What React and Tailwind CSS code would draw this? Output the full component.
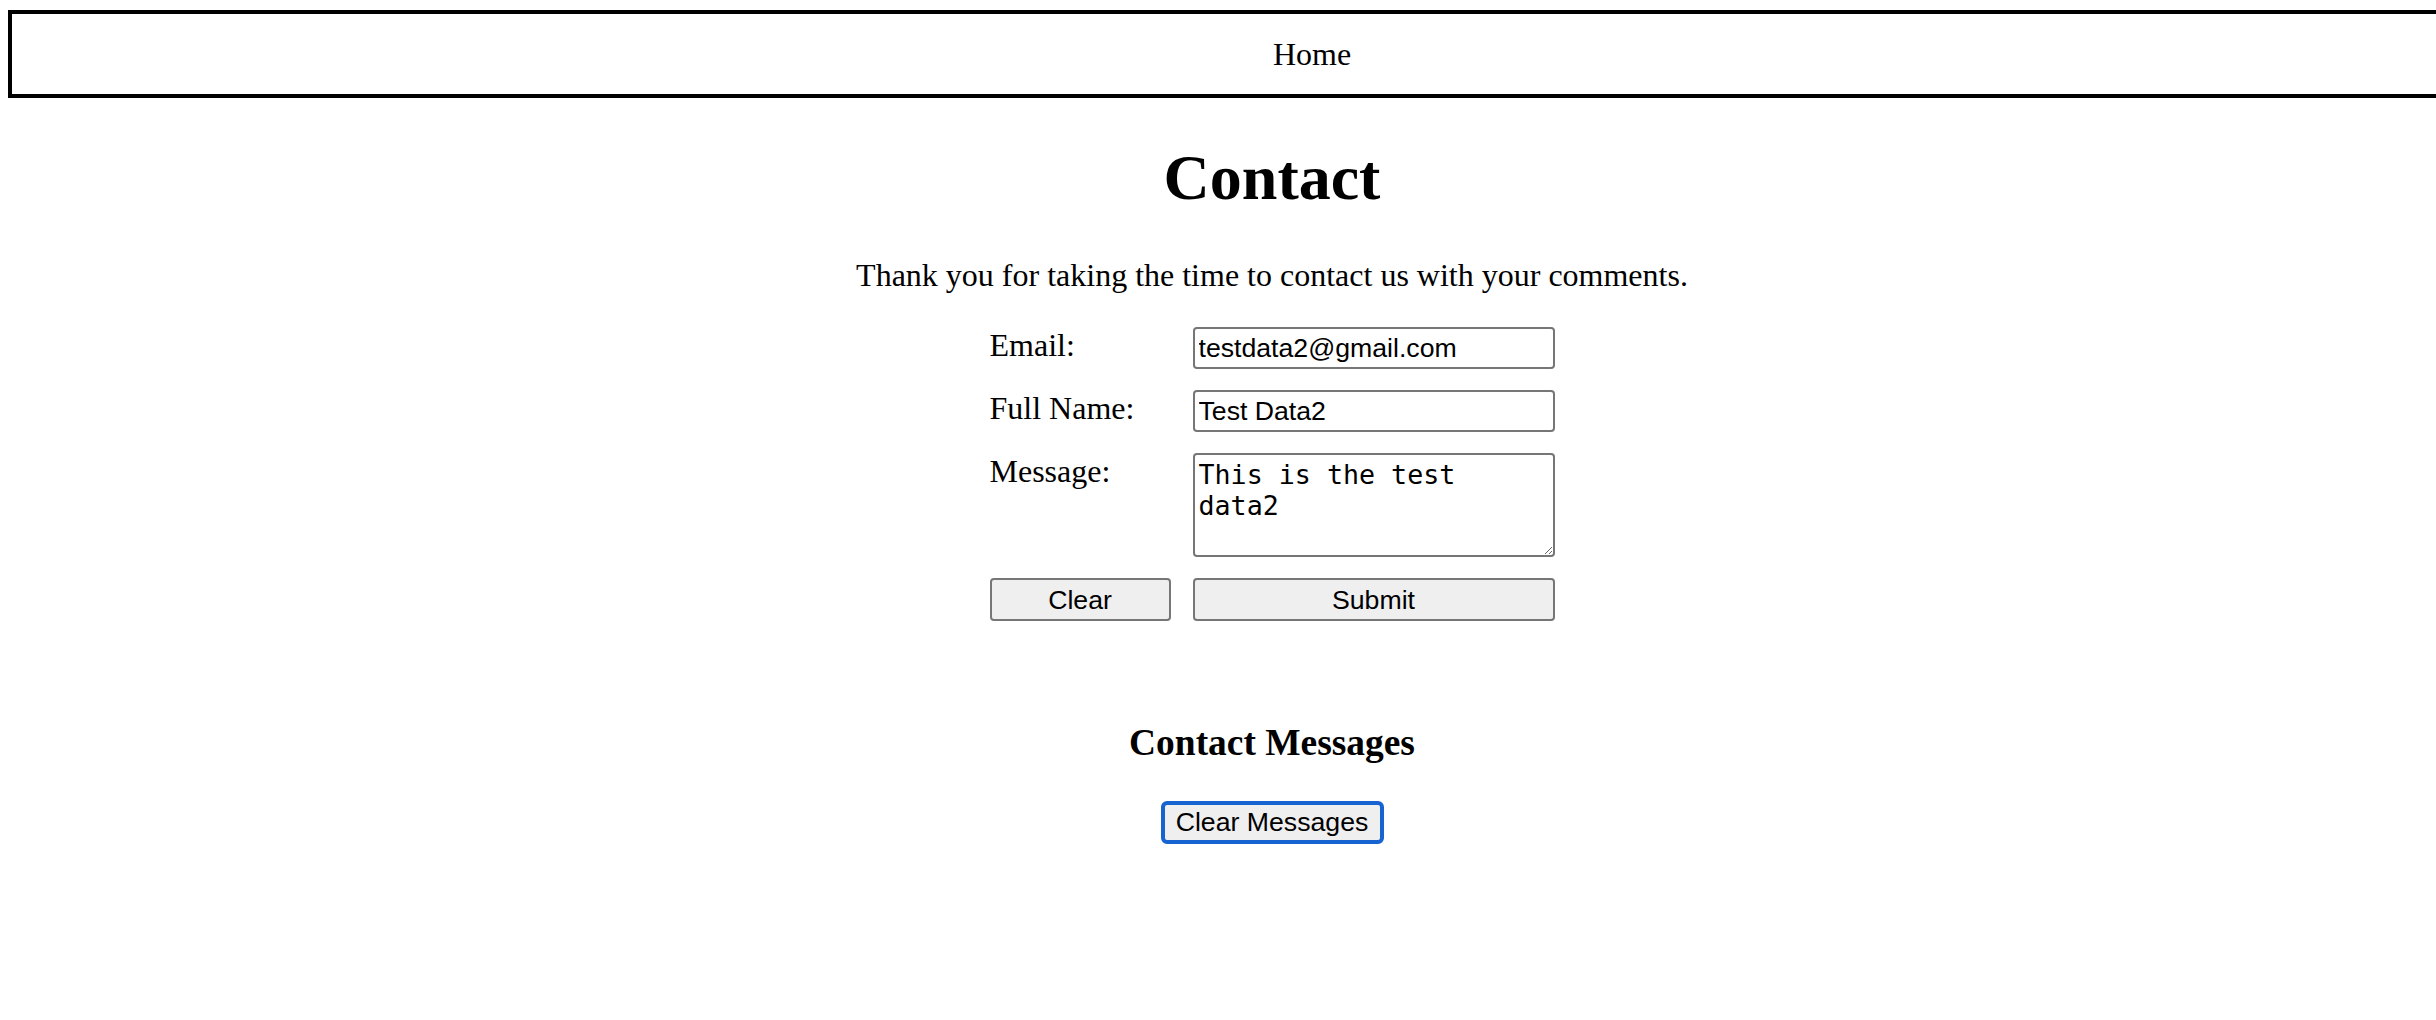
export default function App() {
  return (
    <div className="w-full min-h-screen overflow-hidden bg-white text-black font-['Liberation_Serif','Times_New_Roman',serif]">
      {/* Nav bar */}
      <nav className="ml-[8px] mt-[10px] w-[2608px] h-[88px] border-4 border-black flex items-center justify-center text-[32px]">
        <span>Home</span>
      </nav>

      {/* Content */}
      <main className="pl-[108px] text-center">
        <h1 className="mt-[48px] h-[64px] text-[64px] leading-[64px] font-bold">Contact</h1>
        <p className="mt-[49px] text-[32px] leading-[32px]">
          Thank you for taking the time to contact us with your comments.
        </p>

        <form className="mx-auto mt-[36px] w-[565px] grid grid-cols-[181px_362px] gap-x-[22px] gap-y-[21px] text-left">
          <label className="text-[32px] leading-[36px] self-start">Email:</label>
          <input
            type="email"
            defaultValue="testdata2@gmail.com"
            className="h-[42px] w-full border-2 border-[#767676] rounded-[4px] px-[4px] bg-white font-['Liberation_Sans',Arial,sans-serif] text-[26.67px]"
          />

          <label className="text-[32px] leading-[36px] self-start">Full Name:</label>
          <input
            type="text"
            defaultValue="Test Data2"
            className="h-[42px] w-full border-2 border-[#767676] rounded-[4px] px-[4px] bg-white font-['Liberation_Sans',Arial,sans-serif] text-[26.67px]"
          />

          <label className="text-[32px] leading-[36px] self-start">Message:</label>
          <textarea
            defaultValue="This is the test data2"
            className="h-[104px] w-full border-2 border-[#767676] rounded-[4px] p-[4px] bg-white font-['DejaVu_Sans_Mono',monospace] text-[26.67px] leading-[31px]"
          />

          <button
            type="button"
            className="h-[43px] w-full border-2 border-[#767676] rounded-[4px] bg-[#efefef] font-['Liberation_Sans',Arial,sans-serif] text-[26.67px]"
          >
            Clear
          </button>
          <button
            type="button"
            className="h-[43px] w-full border-2 border-[#767676] rounded-[4px] bg-[#efefef] font-['Liberation_Sans',Arial,sans-serif] text-[26.67px]"
          >
            Submit
          </button>
        </form>

        <h3 className="mt-[103px] h-[37px] text-[37.44px] leading-[37px] font-bold">Contact Messages</h3>
        <div className="mt-[40px] flex justify-center">
          <button
            type="button"
            className="h-[43px] w-[223px] border-4 border-[#1763d0] rounded-[6px] bg-[#efefef] font-['Liberation_Sans',Arial,sans-serif] text-[26.67px] leading-none"
          >
            Clear Messages
          </button>
        </div>
      </main>
    </div>
  );
}
